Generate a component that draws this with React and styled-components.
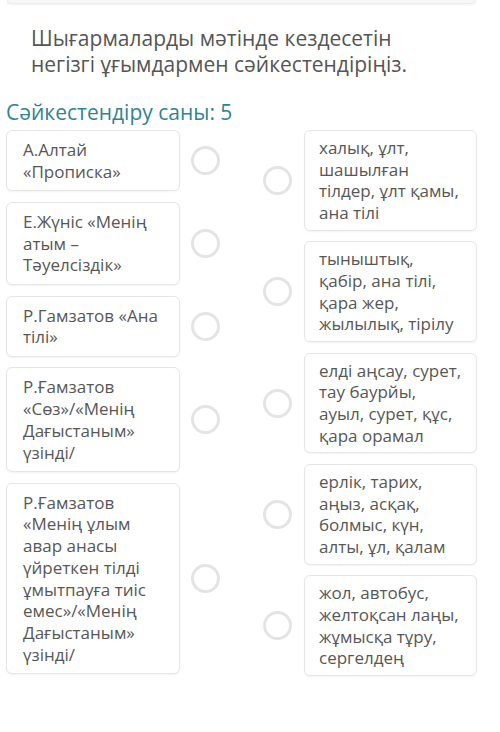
import React from "react";
import styled, { createGlobalStyle } from "styled-components";

const Global = createGlobalStyle`
  html, body { margin: 0; padding: 0; background: #ffffff; }
  body { font-family: "Open Sans", "Noto Sans", sans-serif; color: #555; }
`;

const Page = styled.div`
  width: 500px;
  min-height: 732px;
  box-sizing: border-box;
  padding: 0 23px 0 6px;
  display: flex;
  flex-direction: column;
`;

const TopCard = styled.div`
  height: 3px;
  margin: 0 1px;
  border: 1px solid #ececf0;
  border-top: none;
  border-radius: 0 0 6px 6px;
  background: #f7f7f9;
  box-shadow: 0 1px 3px rgba(0, 0, 0, 0.06);
`;

const Title = styled.h1`
  margin: 21px 0 0 25px;
  width: 400px;
  font-size: 21px;
  font-weight: 400;
  line-height: 26px;
  color: #555;
`;

const Count = styled.div`
  margin-top: 22px;
  font-size: 21px;
  line-height: 26px;
  color: #2f8494;
`;

const Board = styled.div`
  margin-top: 5px;
  display: grid;
  grid-template-columns: 214px 214px;
  column-gap: 43px;
  align-items: start;
`;

const Column = styled.div`
  display: flex;
  flex-direction: column;
  gap: 10.5px;
`;

const Row = styled.div`
  display: flex;
  align-items: center;
  gap: ${(p) => (p.$right ? "12px" : "11px")};
`;

const Card = styled.div`
  width: 175px;
  box-sizing: border-box;
  padding: ${(p) => (p.$right ? "6px 10px 6px 14px" : "8px 10px 8px 16px")};
  border: 1px solid #e6e6e6;
  border-radius: 6px;
  background: #fff;
  box-shadow: 0 1px 2px rgba(0, 0, 0, 0.05);
  font-size: 17px;
  line-height: 21.7px;
  color: #575757;
`;

const Dot = styled.span`
  flex: none;
  width: 29px;
  height: 29px;
  box-sizing: border-box;
  border: 3px solid #e4e4e4;
  border-radius: 50%;
  background: #fff;
`;

const left = [
  ["А.Алтай", "«Прописка»"],
  ["Е.Жүніс «Менің", "атым –", "Тәуелсіздік»"],
  ["Р.Гамзатов «Ана", "тілі»"],
  ["Р.Ғамзатов", "«Сөз»/«Менің", "Дағыстаным»", "үзінді/"],
  [
    "Р.Ғамзатов",
    "«Менің ұлым",
    "авар анасы",
    "үйреткен тілді",
    "ұмытпауға тиіс",
    "емес»/«Менің",
    "Дағыстаным»",
    "үзінді/",
  ],
];

const right = [
  ["халық, ұлт,", "шашылған", "тілдер, ұлт қамы,", "ана тілі"],
  ["тыныштық,", "қабір, ана тілі,", "қара жер,", "жылылық, тірілу"],
  ["елді аңсау, сурет,", "тау баурйы,", "ауыл, сурет, құс,", "қара орамал"],
  ["ерлік, тарих,", "аңыз, асқақ,", "болмыс, күн,", "алты, ұл, қалам"],
  ["жол, автобус,", "желтоқсан лаңы,", "жұмысқа тұру,", "сергелдең"],
];

const Lines = ({ lines }) =>
  lines.map((l, i) => (
    <React.Fragment key={i}>
      {l}
      {i < lines.length - 1 && <br />}
    </React.Fragment>
  ));

export default function App() {
  return (
    <>
      <Global />
      <Page>
        <TopCard />
        <Title>Шығармаларды мәтінде кездесетін негізгі ұғымдармен сәйкестендіріңіз.</Title>
        <Count>Сәйкестендіру саны: 5</Count>
        <Board>
          <Column>
            {left.map((l, i) => (
              <Row key={i}>
                <Card>
                  <Lines lines={l} />
                </Card>
                <Dot />
              </Row>
            ))}
          </Column>
          <Column>
            {right.map((l, i) => (
              <Row key={i} $right>
                <Dot />
                <Card $right>
                  <Lines lines={l} />
                </Card>
              </Row>
            ))}
          </Column>
        </Board>
      </Page>
    </>
  );
}
